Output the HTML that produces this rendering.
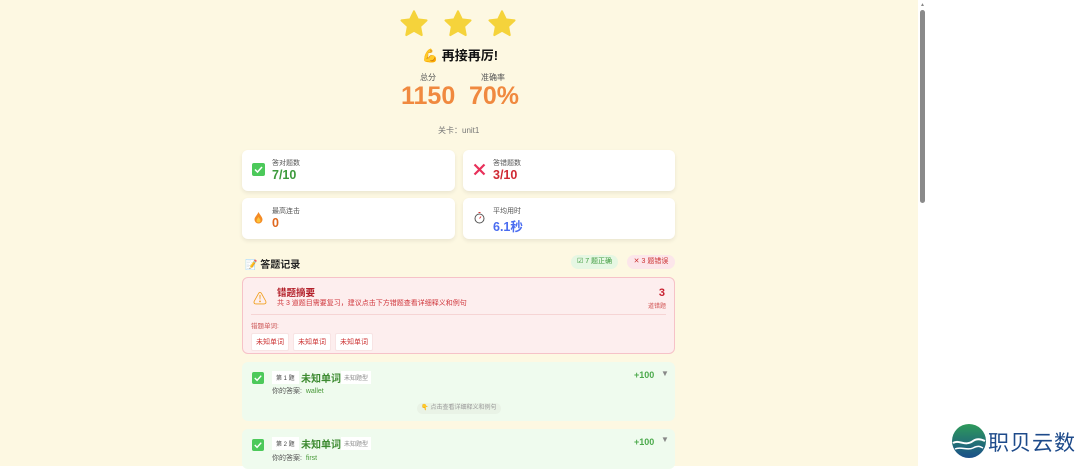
<!DOCTYPE html>
<html><head><meta charset="utf-8"><style>
*{margin:0;padding:0;box-sizing:border-box}
body{width:1080px;height:466px;overflow:hidden;background:#fff;font-family:"Liberation Sans","Noto Sans CJK SC",sans-serif;position:relative}
.page{position:absolute;left:0;top:0;width:918px;height:466px;background:#fdf8e2}
.sb{position:absolute;left:920px;top:10px;width:5px;height:193px;background:#8a8a8a;border-radius:3px}
.a{position:absolute}
.star{position:absolute;top:8px;width:32px;height:32px}
.card{position:absolute;background:#fff;border-radius:6px;box-shadow:0 2px 4px rgba(0,0,0,.08);height:41px}
.card .l{position:absolute;left:30px;top:8px;font-size:7px;color:#555}
.card .v{position:absolute;left:30px;top:18px;font-size:12.5px;font-weight:bold}
.card .ic{position:absolute;left:10px;top:13px;width:13px;height:13px}
.tag{display:inline-block;border:1px solid #f8e4e4;background:#fff;border-radius:2px;font-size:7px;color:#c33;padding:3px 4px;margin-right:4px}
.item{position:absolute;left:242px;width:433px;background:#effbee;border-radius:6px}
</style></head><body>
<div class="page">
<svg class="star" style="left:398px" viewBox="0 0 24 24"><path d="M12 2.5l2.9 6 6.5.8-4.8 4.5 1.2 6.5L12 17.1 6.2 20.3l1.2-6.5L2.6 9.3l6.5-.8z" fill="#f5d33b" stroke="#f5d33b" stroke-width="1.5" stroke-linejoin="round"/></svg>
<svg class="star" style="left:442px" viewBox="0 0 24 24"><path d="M12 2.5l2.9 6 6.5.8-4.8 4.5 1.2 6.5L12 17.1 6.2 20.3l1.2-6.5L2.6 9.3l6.5-.8z" fill="#f5d33b" stroke="#f5d33b" stroke-width="1.5" stroke-linejoin="round"/></svg>
<svg class="star" style="left:486px" viewBox="0 0 24 24"><path d="M12 2.5l2.9 6 6.5.8-4.8 4.5 1.2 6.5L12 17.1 6.2 20.3l1.2-6.5L2.6 9.3l6.5-.8z" fill="#f5d33b" stroke="#f5d33b" stroke-width="1.5" stroke-linejoin="round"/></svg>
<div class="a" style="left:422px;top:45px;font-size:13px;font-weight:bold;color:#111"><span style="color:#f2c838">💪</span> 再接再厉!</div>
<div class="a" style="left:420px;top:72px;font-size:8px;color:#555">总分</div>
<div class="a" style="left:481px;top:72px;font-size:8px;color:#555">准确率</div>
<div class="a" style="left:401px;top:82px;font-size:25px;font-weight:bold;color:#f0893f">1150</div>
<div class="a" style="left:469px;top:82px;font-size:25px;font-weight:bold;color:#f0893f">70%</div>
<div class="a" style="left:438px;top:125px;font-size:8px;color:#777">关卡：unit1</div>

<div class="card" style="left:242px;top:150px;width:213px"><svg class="ic" viewBox="0 0 13 13"><rect width="13" height="13" rx="2" fill="#4cc95a"/><path d="M3 6.5l2.5 2.5 4.5-5" stroke="#fff" stroke-width="1.5" fill="none"/></svg><div class="l">答对题数</div><div class="v" style="color:#3c9a3c">7/10</div></div>
<div class="card" style="left:463px;top:150px;width:212px"><svg class="ic" viewBox="0 0 13 13"><path d="M1.5 1.5l10 10M11.5 1.5l-10 10" stroke="#e8305a" stroke-width="2.2"/></svg><div class="l">答错题数</div><div class="v" style="color:#d02a34">3/10</div></div>
<div class="card" style="left:242px;top:198px;width:213px"><svg class="ic" viewBox="0 0 13 13"><path d="M6.5 1C8 4 10.5 6 10.5 8.5a4 4 0 0 1-8 0C2.5 6 5 4.5 6.5 1z" fill="#f48b25"/><path d="M6.5 6c1 1.5 2 2.5 2 3.5a2 2 0 0 1-4 0c0-1 1-2 2-3.5z" fill="#fbc33a"/></svg><div class="l">最高连击</div><div class="v" style="color:#e0681e">0</div></div>
<div class="card" style="left:463px;top:198px;width:212px"><svg class="ic" viewBox="0 0 13 13"><circle cx="6.5" cy="7.5" r="4.5" stroke="#555" fill="#fff" stroke-width="1"/><path d="M6.5 7.5l1.5-2M5.5 1.5h2" stroke="#d33" stroke-width="1"/></svg><div class="l">平均用时</div><div class="v" style="color:#4a6cf0">6.1秒</div></div>

<div class="a" style="left:245px;top:256px;font-size:10px;font-weight:bold;color:#222">📝 答题记录</div>
<div class="a" style="left:571px;top:255px;width:47px;height:14px;background:#e6f7e3;border-radius:7px;font-size:7px;color:#3c9a3c;line-height:14px;text-align:center">☑ 7 题正确</div>
<div class="a" style="left:627px;top:255px;width:48px;height:14px;background:#fce6ea;border-radius:7px;font-size:7px;color:#c33;line-height:14px;text-align:center">✕ 3 题错误</div>

<div class="a" style="left:242px;top:277px;width:433px;height:77px;background:#fdeeee;border:1px solid #f6c2c8;border-radius:6px">
<div class="a" style="left:10px;top:11px;font-size:14px;color:#f0a020">⚠</div>
<div class="a" style="left:34px;top:7px;font-size:9.5px;font-weight:bold;color:#b3202a">错题摘要</div>
<div class="a" style="left:34px;top:20px;font-size:7px;color:#d0363c">共 3 道题目需要复习，建议点击下方错题查看详细释义和例句</div>
<div class="a" style="right:9px;top:9px;font-size:11px;font-weight:bold;color:#c82030">3</div>
<div class="a" style="right:8px;top:23px;font-size:6px;color:#d05050">道错题</div>
<div class="a" style="left:8px;top:36px;width:415px;height:1px;background:#f6d4d4"></div>
<div class="a" style="left:8px;top:42px;font-size:6.5px;color:#c55">错题单词:</div>
<div class="a" style="left:8px;top:53px"><span class="tag">未知单词</span><span class="tag">未知单词</span><span class="tag">未知单词</span></div>
</div>

<div class="item" style="top:362px;height:59px">
<svg class="a" style="left:10px;top:10px" width="12" height="12" viewBox="0 0 13 13"><rect width="13" height="13" rx="2" fill="#4cc95a"/><path d="M3 6.5l2.5 2.5 4.5-5" stroke="#fff" stroke-width="1.5" fill="none"/></svg>
<div class="a" style="left:30px;top:9px;background:#fff;font-size:6px;color:#444;padding:2px 4px">第 1 题</div>
<div class="a" style="left:59px;top:8px;font-size:10px;font-weight:bold;color:#3c8a30">未知单词</div>
<div class="a" style="left:99px;top:9px;background:#fff;font-size:6px;color:#888;padding:2px 3px">未知题型</div>
<div class="a" style="left:392px;top:8px;font-size:9px;font-weight:bold;color:#4caa4c">+100</div>
<div class="a" style="left:419px;top:7px;font-size:8px;color:#888">▼</div>
<div class="a" style="left:30px;top:24px;font-size:7px;color:#555">你的答案: &nbsp;<span style="color:#4a9a3a">wallet</span></div>
<div class="a" style="left:175px;top:41px;width:84px;height:11px;background:#e9f3e6;border-radius:6px;font-size:6px;color:#999;line-height:11px;text-align:center">👇 点击查看详细释义和例句</div>
</div>
<div class="item" style="top:429px;height:40px">
<svg class="a" style="left:10px;top:10px" width="12" height="12" viewBox="0 0 13 13"><rect width="13" height="13" rx="2" fill="#4cc95a"/><path d="M3 6.5l2.5 2.5 4.5-5" stroke="#fff" stroke-width="1.5" fill="none"/></svg>
<div class="a" style="left:30px;top:8px;background:#fff;font-size:6px;color:#444;padding:2px 4px">第 2 题</div>
<div class="a" style="left:59px;top:7px;font-size:10px;font-weight:bold;color:#3c8a30">未知单词</div>
<div class="a" style="left:99px;top:8px;background:#fff;font-size:6px;color:#888;padding:2px 3px">未知题型</div>
<div class="a" style="left:392px;top:8px;font-size:9px;font-weight:bold;color:#4caa4c">+100</div>
<div class="a" style="left:419px;top:6px;font-size:8px;color:#888">▼</div>
<div class="a" style="left:30px;top:24px;font-size:7px;color:#555">你的答案: &nbsp;<span style="color:#4a9a3a">first</span></div>
</div>
</div>
<div class="sb"></div>
<div class="a" style="left:920px;top:2px;font-size:5px;color:#888">▲</div>
<svg class="a" style="left:951px;top:423px" width="36" height="36" viewBox="0 0 36 36"><defs><linearGradient id="g" x1="0" y1="0" x2="0" y2="1"><stop offset="0" stop-color="#2e9a5a"/><stop offset="1" stop-color="#1a4f8a"/></linearGradient></defs><circle cx="18" cy="18" r="17" fill="url(#g)"/><path d="M2 20c6-4 12 4 20-2 4-3 8-2 12 0" stroke="#fff" stroke-width="2" fill="none"/><path d="M4 26c6-3 12 2 18-1s8-1 10 0" stroke="#fff" stroke-width="1.5" fill="none"/></svg>
<div class="a" style="left:988px;top:427px;font-size:21px;color:#1d4a8a;letter-spacing:1px">职贝云数</div>
</body></html>
